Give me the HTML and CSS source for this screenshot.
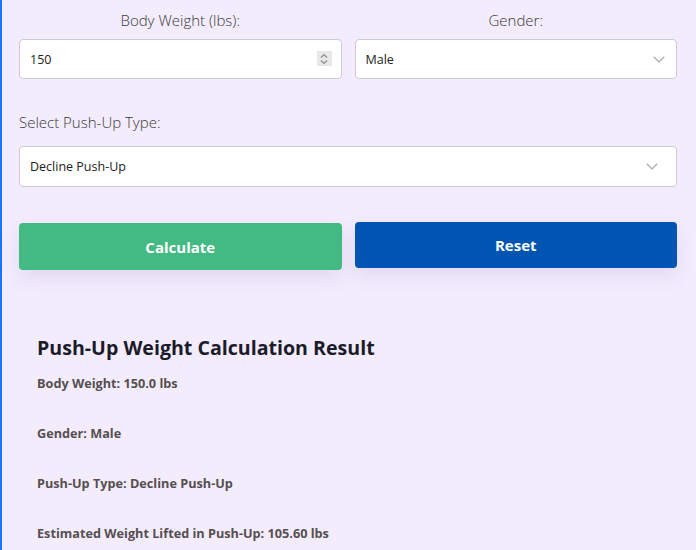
FILE: index.html
```html
<!DOCTYPE html>
<html lang="en">

<head>
    <meta charset="UTF-8">
    <meta name="viewport" content="width=device-width, initial-scale=1.0">
    <title>Push-Up Weight Calculator</title>
    <link rel="stylesheet" href="styles.css">
</head>

<body>
    <div class="calculator">
        <!-- body weight + gender -->
        <div class="row">
            <div class="field">
                <label for="weight">Body Weight (lbs):</label>
                <div class="input-wrap">
                    <input type="number" id="weight" value="150">
                    <span class="spinner">
                        <svg width="10" height="14" viewBox="0 0 10 14">
                            <path d="M2 5.5 L5 2.5 L8 5.5 M2 8.5 L5 11.5 L8 8.5" fill="none" stroke="#8a8a8a" stroke-width="1.1"/>
                        </svg>
                    </span>
                </div>
            </div>
            <div class="field">
                <label for="gender">Gender:</label>
                <div class="select-wrap">
                    <select id="gender">
                        <option>Male</option>
                        <option>Female</option>
                    </select>
                    <svg class="chevron" width="12" height="7" viewBox="0 0 12 7">
                        <path d="M0.8 0.8 L6 6 L11.2 0.8" fill="none" stroke="#b0b0b0" stroke-width="1.4"/>
                    </svg>
                </div>
            </div>
        </div>

        <!-- push-up type -->
        <div class="field type-field">
            <label for="type">Select Push-Up Type:</label>
            <div class="select-wrap">
                <select id="type">
                    <option>Standard Push-Up</option>
                    <option selected>Decline Push-Up</option>
                    <option>Incline Push-Up</option>
                </select>
                <svg class="chevron" width="12" height="7" viewBox="0 0 12 7">
                    <path d="M0.8 0.8 L6 6 L11.2 0.8" fill="none" stroke="#b0b0b0" stroke-width="1.4"/>
                </svg>
            </div>
        </div>

        <!-- buttons -->
        <div class="row buttons">
            <button class="btn btn-calc">Calculate</button>
            <button class="btn btn-reset">Reset</button>
        </div>

        <!-- result -->
        <div class="result">
            <h2>Push-Up Weight Calculation Result</h2>
            <p>Body Weight: 150.0 lbs</p>
            <p>Gender: Male</p>
            <p>Push-Up Type: Decline Push-Up</p>
            <p>Estimated Weight Lifted in Push-Up: 105.60 lbs</p>
        </div>
    </div>
</body>

</html>
```

FILE: styles.css
```css
/* page */
body {
    margin: 0;
    height: 550px;
    overflow: hidden;
    font-family: "Open Sans", "Noto Sans", sans-serif;
    background-color: #f3ecfd;
    border-left: 2px solid #1477ff;
    color: #333;
}

.calculator {
    padding: 0 19px 0 17px;
}

.row {
    display: grid;
    grid-template-columns: 1fr 1fr;
    gap: 13px;
}

.field label {
    display: block;
    text-align: center;
    font-size: 15px;
    font-weight: 300;
    color: #3a3a3a;
    padding-top: 10px;
    margin-bottom: 8px;
    line-height: 21px;
}

.type-field {
    margin-top: 23px;
}

.type-field label {
    text-align: left;
    margin-bottom: 13px;
}

.input-wrap,
.select-wrap {
    position: relative;
}

input[type="number"],
select {
    width: 100%;
    height: 40px;
    box-sizing: border-box;
    padding: 0 10px;
    border: 1px solid #cfcbd3;
    border-radius: 4px;
    background-color: #fff;
    font-family: inherit;
    font-size: 12.5px;
    color: #222;
    outline: none;
    -webkit-appearance: none;
    appearance: none;
}

#type {
    height: 41px;
}

input[type="number"]::-webkit-outer-spin-button,
input[type="number"]::-webkit-inner-spin-button {
    -webkit-appearance: none;
    margin: 0;
}

.spinner {
    position: absolute;
    right: 10px;
    top: 12px;
    width: 15px;
    height: 15px;
    background: #e8e8e8;
    display: flex;
    align-items: center;
    justify-content: center;
}

.chevron {
    position: absolute;
    right: 12px;
    top: 17px;
    pointer-events: none;
}

.type-field .chevron {
    right: 19px;
}

.buttons {
    margin-top: 35px;
    align-items: start;
}

.btn {
    border: none;
    border-radius: 4px;
    color: #fff;
    font-family: inherit;
    font-size: 15px;
    font-weight: 700;
    cursor: pointer;
    box-shadow: 0 8px 18px rgba(110, 90, 170, 0.13);
}

.btn-calc {
    margin-top: 1px;
    height: 47px;
    padding-top: 2px;
    background-color: #43b983;
}

.btn-reset {
    height: 46px;
    background-color: #0055b3;
}

.result {
    padding: 64px 18px 0;
}

.result h2 {
    margin: 0 0 12px;
    font-size: 19.6px;
    line-height: 28px;
    color: #1c1b2a;
}

.result p {
    margin: 0 0 31px;
    font-size: 12.7px;
    line-height: 19px;
    font-weight: 700;
    color: #564f50;
}
```
